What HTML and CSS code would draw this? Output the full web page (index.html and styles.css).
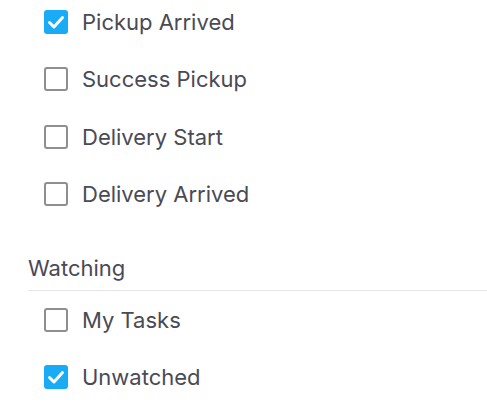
FILE: index.html
```html
<!DOCTYPE html>
<html lang="en">
<head>
  <meta charset="UTF-8" />
  <meta name="viewport" content="width=device-width, initial-scale=1.0"/>
  <title>Filters</title>
  <link rel="stylesheet" href="styles.css">
</head>
<body>
  <div class="panel">
    <ul class="options">
      <li class="option">
        <span class="box checked"><svg viewBox="0 0 24 24"><path d="M5.5 12.5l4.5 4.5 8.5-9.5" /></svg></span>
        <span class="label">Pickup Arrived</span>
      </li>
      <li class="option">
        <span class="box"></span>
        <span class="label">Success Pickup</span>
      </li>
      <li class="option">
        <span class="box"></span>
        <span class="label">Delivery Start</span>
      </li>
      <li class="option">
        <span class="box"></span>
        <span class="label">Delivery Arrived</span>
      </li>
    </ul>

    <!-- Watching section -->
    <div class="section-title">Watching</div>
    <ul class="options">
      <li class="option">
        <span class="box"></span>
        <span class="label">My Tasks</span>
      </li>
      <li class="option">
        <span class="box checked"><svg viewBox="0 0 24 24"><path d="M5.5 12.5l4.5 4.5 8.5-9.5" /></svg></span>
        <span class="label">Unwatched</span>
      </li>
    </ul>
  </div>
</body>
</html>
```

FILE: styles.css
```css
body {
  margin: 0;
  padding: 0;
  background: #fff;
  font-family: Inter, "Noto Sans", sans-serif;
  color: #4a4a55;
  overflow: hidden;
}

.panel {
  padding-left: 28px;
  margin-top: -7px;
}

.options {
  list-style: none;
  margin: 0;
  padding: 0 0 0 16px;
}

.option {
  display: flex;
  align-items: center;
  gap: 14px;
  height: 57.5px;
  font-size: 22px;
}

.box {
  box-sizing: border-box;
  width: 24px;
  height: 24px;
  border: 2px solid #8e8e93;
  border-radius: 3px;
  display: flex;
  align-items: center;
  justify-content: center;
  flex-shrink: 0;
}

.box.checked {
  border: none;
  background: #1aabf7;
}

.box svg {
  width: 24px;
  height: 24px;
  fill: none;
  stroke: #fff;
  stroke-width: 3;
  stroke-linecap: round;
  stroke-linejoin: round;
}

/* Section heading with divider line */
.section-title {
  margin-top: 31px;
  font-size: 22px;
  line-height: 28px;
  padding-bottom: 8px;
  border-bottom: 1px solid #e6e6e6;
}
```
